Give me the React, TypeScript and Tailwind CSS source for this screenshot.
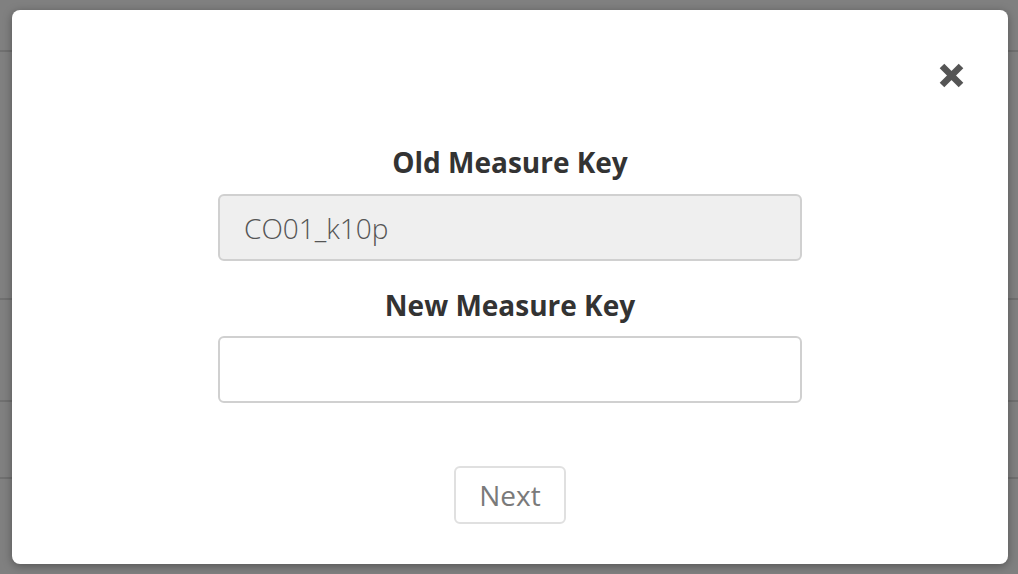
export default function App() {
  return (
    <div className="relative h-[574px] w-full overflow-hidden bg-[#808080]" style={{ fontFamily: '"Open Sans", sans-serif' }}>
      {/* page behind the overlay */}
      <div className="flex flex-col">
        <div className="h-[52px] border-b-2 border-[#707070]" />
        <div className="h-[248px] border-b-2 border-[#707070]" />
        <div className="h-[102px] border-b-2 border-[#707070]" />
        <div className="h-[77px] border-b-2 border-[#707070]" />
      </div>

      {/* modal */}
      <div className="absolute left-[12px] top-[10px] h-[554px] w-[996px] rounded-[8px] bg-white shadow-[0_2px_10px_rgba(0,0,0,0.35)]">
        <button className="absolute right-[43px] top-[52px]" aria-label="Close">
          <svg width="27" height="27" viewBox="0 0 27 27">
            <path d="M4 4 L23 23 M23 4 L4 23" stroke="#555" strokeWidth="6.5" strokeLinecap="butt" fill="none" />
          </svg>
        </button>

        <div className="flex flex-col items-center pt-[134px]">
          <label className="text-[28px] font-bold leading-[36px] text-[#333]">Old Measure Key</label>
          <input
            readOnly
            value="CO01_k10p"
            className="mt-[14px] h-[67px] w-[584px] rounded-[6px] border-2 border-[#d0d0d0] bg-[#efefef] px-[24px] text-[28px] font-light text-[#555] outline-none"
          />
          <label className="mt-[26px] text-[28px] font-bold leading-[36px] text-[#333]">New Measure Key</label>
          <input className="mt-[13px] h-[67px] w-[584px] rounded-[6px] border-2 border-[#d0d0d0] bg-white px-[24px] text-[28px] font-light text-[#555] outline-none" />
          <button className="mt-[63px] h-[58px] w-[112px] rounded-[6px] border-2 border-[#e0e0e0] bg-white text-[28px] text-[#7a7a7a]">
            Next
          </button>
        </div>
      </div>
    </div>
  );
}
